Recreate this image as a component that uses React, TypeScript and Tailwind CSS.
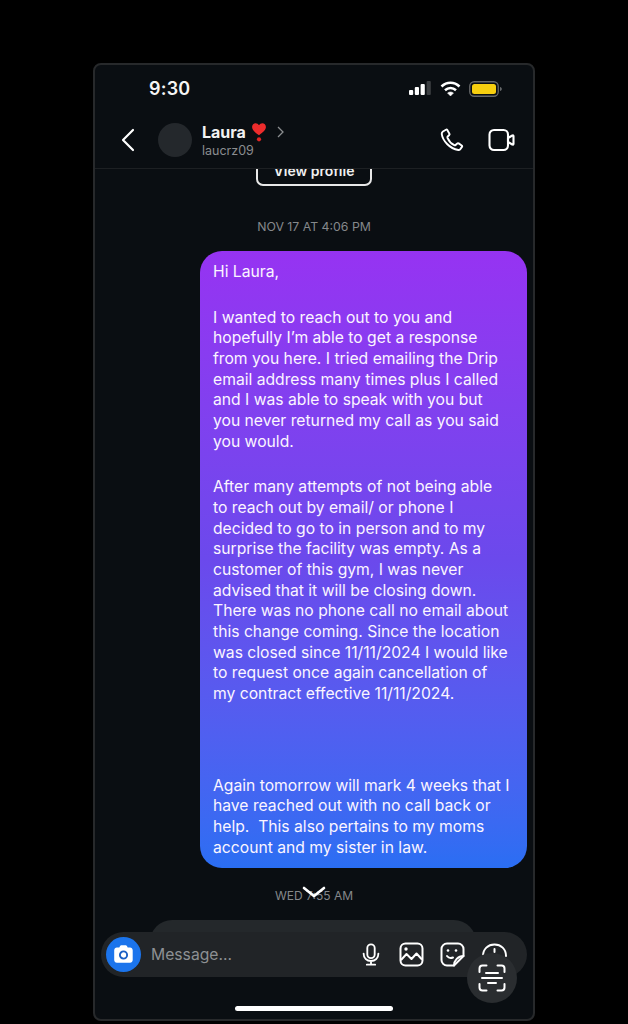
import React from "react";

const paragraphs: string[][] = [
  ["Hi Laura,"],
  [
    "I wanted to reach out to you and",
    "hopefully I’m able to get a response",
    "from you here. I tried emailing the Drip",
    "email address many times plus I called",
    "and I was able to speak with you but",
    "you never returned my call as you said",
    "you would.",
  ],
  [
    "After many attempts of not being able",
    "to reach out by email/ or phone I",
    "decided to go to in person and to my",
    "surprise the facility was empty. As a",
    "customer of this gym, I was never",
    "advised that it will be closing down.",
    "There was no phone call no email about",
    "this change coming. Since the location",
    "was closed since 11/11/2024 I would like",
    "to request once again cancellation of",
    "my contract effective 11/11/2024.",
  ],
  [
    "Again tomorrow will mark 4 weeks that I",
    "have reached out with no call back or",
    "help.  This also pertains to my moms",
    "account and my sister in law.",
  ],
];

const font = { fontFamily: "Inter, 'Noto Sans', sans-serif" };

export default function App() {
  return (
    <div className="h-[1024px] w-[628px] overflow-hidden bg-black pl-[93px] pt-[63px] text-white" style={font}>
      <div className="relative flex h-[958px] w-[442px] flex-col overflow-hidden rounded-[8px] border-2 border-[#27292b] bg-[#0a0e12]">
        {/* Status bar */}
        <div className="flex h-[47px] shrink-0 items-center justify-between pl-[54px] pr-[31px]">
          <span className="text-[18px] font-semibold leading-none tracking-[0.2px] text-[#f5f5f5]">9:30</span>
          <div className="flex items-center gap-[8px]">
            <svg width="23" height="15" viewBox="0 0 23 15">
              <rect x="0" y="9" width="4.2" height="5" rx="1" fill="#fff" />
              <rect x="5.800" y="6" width="4.2" height="8" rx="1" fill="#fff" />
              <rect x="11.600" y="3" width="4.2" height="11" rx="1" fill="#fff" />
              <rect x="17.600" y="0" width="4.2" height="14" rx="1" fill="#3c3f42" />
            </svg>
            <svg width="21" height="16" viewBox="0 0 21 16" fill="none" stroke="#fff" strokeWidth="2.6">
              <path d="M1.5 5.5C6.8 .5 14.2 .5 19.5 5.5" />
              <path d="M5 9.2c3.2-2.9 7.8-2.9 11 0" />
              <path d="M10.5 15l-3-3c1.7-1.4 4.3-1.4 6 0z" fill="#fff" strokeWidth="0.5" />
            </svg>
            <svg width="33" height="16" viewBox="0 0 33 16">
              <rect x="0.75" y="0.75" width="28.5" height="14.5" rx="4.5" fill="none" stroke="#66686a" strokeWidth="1.3" />
              <rect x="3" y="3" width="24" height="10" rx="2.5" fill="#f7cf0f" />
              <path d="M31 6v4c1.2-.3 1.8-1 1.8-2s-.6-1.7-1.8-2z" fill="#66686a" />
            </svg>
          </div>
        </div>

        {/* Header */}
        <div className="flex h-[57px] shrink-0 items-center border-b border-[#1d2023] pl-[25px] pr-[18px]">
          <svg width="16" height="24" viewBox="0 0 16 24" fill="none" stroke="#fff" strokeWidth="2.2" strokeLinecap="round" strokeLinejoin="round" className="mb-[1px]">
            <path d="M13 2 3 12l10 10" />
          </svg>
          <div className="ml-[22px] h-[34px] w-[34px] shrink-0 rounded-full bg-[#24282c]" />
          <div className="ml-[10px] flex flex-col">
            <div className="flex h-[20px] items-center">
              <span className="text-[16px] font-bold leading-[20px] text-[#f2f2f2]">Laura</span>
              <svg width="18" height="21" viewBox="0 0 16 20" className="ml-[4px] mt-[1px]">
                <path d="M8 12.5C4 9.8 1.4 7.6 1.4 4.8 1.4 2.6 3 1.2 4.8 1.2c1.3 0 2.5.7 3.2 1.9.7-1.2 1.9-1.9 3.2-1.9 1.8 0 3.4 1.4 3.4 3.6 0 2.8-2.6 5-6.6 7.7z" fill="#ed2c2c" />
                <circle cx="8" cy="16.5" r="2" fill="#e02525" />
              </svg>
              <svg width="9" height="12" viewBox="0 0 9 12" fill="none" stroke="#8c8e90" strokeWidth="1.3" className="ml-[8px] mb-[1px]">
                <path d="M2 1l5 5-5 5" />
              </svg>
            </div>
            <span className="mt-[1px] text-[12.5px] leading-[15px] text-[#8b8d90]">laucrz09</span>
          </div>
          <div className="ml-auto flex items-center gap-[24px]">
            <svg width="24" height="24" viewBox="0 0 26 26" fill="none" stroke="#fff" strokeWidth="2.1" strokeLinejoin="round">
              <path d="M3.2 3.8 6.4 1.9c.6-.3 1.2-.1 1.5.4l2.3 3.8c.3.5.2 1.1-.2 1.5L8.4 9.2c-.4.4-.5.9-.3 1.4 1.5 3.5 4 6.3 7.4 8 .5.2 1 .2 1.4-.2l1.8-1.6c.4-.4 1-.4 1.5-.1l3.3 2.2c.6.4.7 1.1.3 1.6l-2 2.6c-.5.6-1.2.9-2 .8C10.500 22.300 2.800 13.700 1.900 6.500c-.1-1.100.4-2.100 1.300-2.700z" />
            </svg>
            <svg width="27" height="24" viewBox="0 0 27 24" fill="none" stroke="#fff" strokeWidth="2.1" strokeLinejoin="round">
              <rect x="1.500" y="2" width="18.500" height="20" rx="4.500" />
              <path d="M20 10 24.300 7.500c.6-.4 1.200 0 1.200.8v7.400c0 .8-.6 1.200-1.200.8L20 14z" />
            </svg>
          </div>
        </div>

        {/* Conversation */}
        <div className="relative flex min-h-0 flex-1 flex-col items-center overflow-hidden">
          <div className="mt-[-18px] flex h-[35px] w-[116px] shrink-0 items-center justify-center rounded-[7px] border-2 border-[#e8e8e8] pt-[3px] text-[14px] font-semibold text-[#f0f0f0]">
            View profile
          </div>
          <div className="mt-[33px] text-[12.3px] leading-[16px] text-[#85888b]">NOV 17 AT 4:06 PM</div>
          <div className="mt-[16px] mr-[6px] w-[327px] self-end rounded-[22px] bg-gradient-to-b from-[#9633f2] via-[#6b49ec] to-[#2a6ef3] px-[13px] pb-[10px] pt-[11px] text-[15.7px] leading-[20.67px] text-[#fbf5ff]">
            {paragraphs.map((p, i) => (
              <div key={i} className={i === 3 ? "mt-[71px]" : i > 0 ? "mt-[25px]" : ""}>
                {p.map((l) => (
                  <div key={l} className="whitespace-pre">
                    {l}
                  </div>
                ))}
              </div>
            ))}
          </div>
          <div className="mt-[20px] text-[12px] leading-[16px] text-[#85888b]">WED 7:55 AM</div>
        </div>

        {/* Scroll chevron */}
        <svg width="24" height="13" viewBox="0 0 24 13" fill="none" stroke="#fff" strokeWidth="2.6" strokeLinecap="round" className="absolute left-[207px] top-[821px]">
          <path d="M2 2l10 8L22 2" />
        </svg>

        {/* Composer */}
        <div className="relative h-[98px] shrink-0">
          <div className="absolute left-[55px] top-[-1px] h-[40px] w-[326px] rounded-t-[22px] bg-[#24282b]" />
          <div className="absolute left-[6px] top-[11px] flex h-[45px] w-[426px] items-center rounded-[23px] bg-[#212427] pl-[5px] pr-[20px]">
            <div className="flex h-[35px] w-[35px] shrink-0 items-center justify-center rounded-full bg-[#1b74ec]">
              <svg width="21" height="19" viewBox="0 0 21 19">
                <path d="M6.800 1.500C7.200.6 7.900.200 8.700.200h3.600c.8 0 1.500.4 1.900 1.300l.5 1h2.300c1.500 0 2.700 1.200 2.700 2.700v9.900c0 1.500-1.200 2.700-2.700 2.700H3.900c-1.500 0-2.700-1.200-2.700-2.700V5.200c0-1.500 1.200-2.700 2.700-2.700h2.400z" fill="#fff" />
                <circle cx="10.500" cy="10" r="3.600" fill="none" stroke="#1b5fc4" strokeWidth="1.900" />
              </svg>
            </div>
            <span className="ml-[10px] text-[15.7px] text-[#8d9093]">Message...</span>
            <div className="ml-auto flex items-center gap-[16px]">
              <svg width="24" height="25" viewBox="0 0 26 26" fill="none" stroke="#fff" strokeWidth="2" strokeLinecap="round">
                <rect x="9" y="2" width="8" height="15" rx="4" />
                <path d="M5 12c0 5 3.500 8 8 8s8-3 8-8M13 20v3M8.500 24h9" />
              </svg>
              <svg width="25" height="25" viewBox="0 0 25 25" fill="none" stroke="#fff" strokeWidth="2" strokeLinejoin="round">
                <rect x="1.500" y="1.500" width="22" height="22" rx="5" />
                <circle cx="7" cy="7" r="1.700" fill="#fff" stroke="none" />
                <path d="M2 18l5.500-6 5 5 5-5.500 5.500 6" />
              </svg>
              <svg width="25" height="25" viewBox="0 0 25 25" fill="none" stroke="#fff" strokeWidth="2" strokeLinejoin="round" strokeLinecap="round">
                <path d="M23.500 14V7c0-3-2.500-5.500-5.500-5.500H7C4 1.500 1.500 4 1.500 7v11c0 3 2.500 5.500 5.500 5.500h7z" />
                <path d="M14 23.500c0-5 4-9.500 9.500-9.500" />
                <path d="M7 14c1.500 2 3.500 2.500 6 1.500" />
                <circle cx="8" cy="8.500" r="1.300" fill="#fff" stroke="none" />
                <circle cx="16" cy="8.500" r="1.300" fill="#fff" stroke="none" />
              </svg>
              <svg width="25" height="25" viewBox="0 0 25 25" fill="none" stroke="#fff" strokeWidth="2" strokeLinecap="round" className="ml-[1px]">
                <path d="M1 14C1 7 6 2.500 12.500 2.500S24 7 24 14" />
                <path d="M12.500 7v3" />
              </svg>
            </div>
          </div>
          <div className="absolute left-[372px] top-[32px] flex h-[50px] w-[50px] items-center justify-center rounded-full bg-[#2a2d30]">
            <svg width="28" height="28" viewBox="0 0 28 28" fill="none" stroke="#fff" strokeWidth="2" strokeLinecap="round" strokeLinejoin="round">
              <path d="M1.500 8V4.500c0-1.600 1.300-3 3-3h4M19.500 1.500h4c1.700 0 3 1.400 3 3V8M26.500 20v3.500c0 1.700-1.300 3-3 3h-4M8.500 26.500h-4c-1.700 0-3-1.300-3-3V20" />
              <path d="M8 9h12M4 14h20M10 19h8" />
            </svg>
          </div>
          <div className="absolute bottom-[8px] left-[140px] h-[5px] w-[158px] rounded-full bg-white" />
        </div>
      </div>
    </div>
  );
}
